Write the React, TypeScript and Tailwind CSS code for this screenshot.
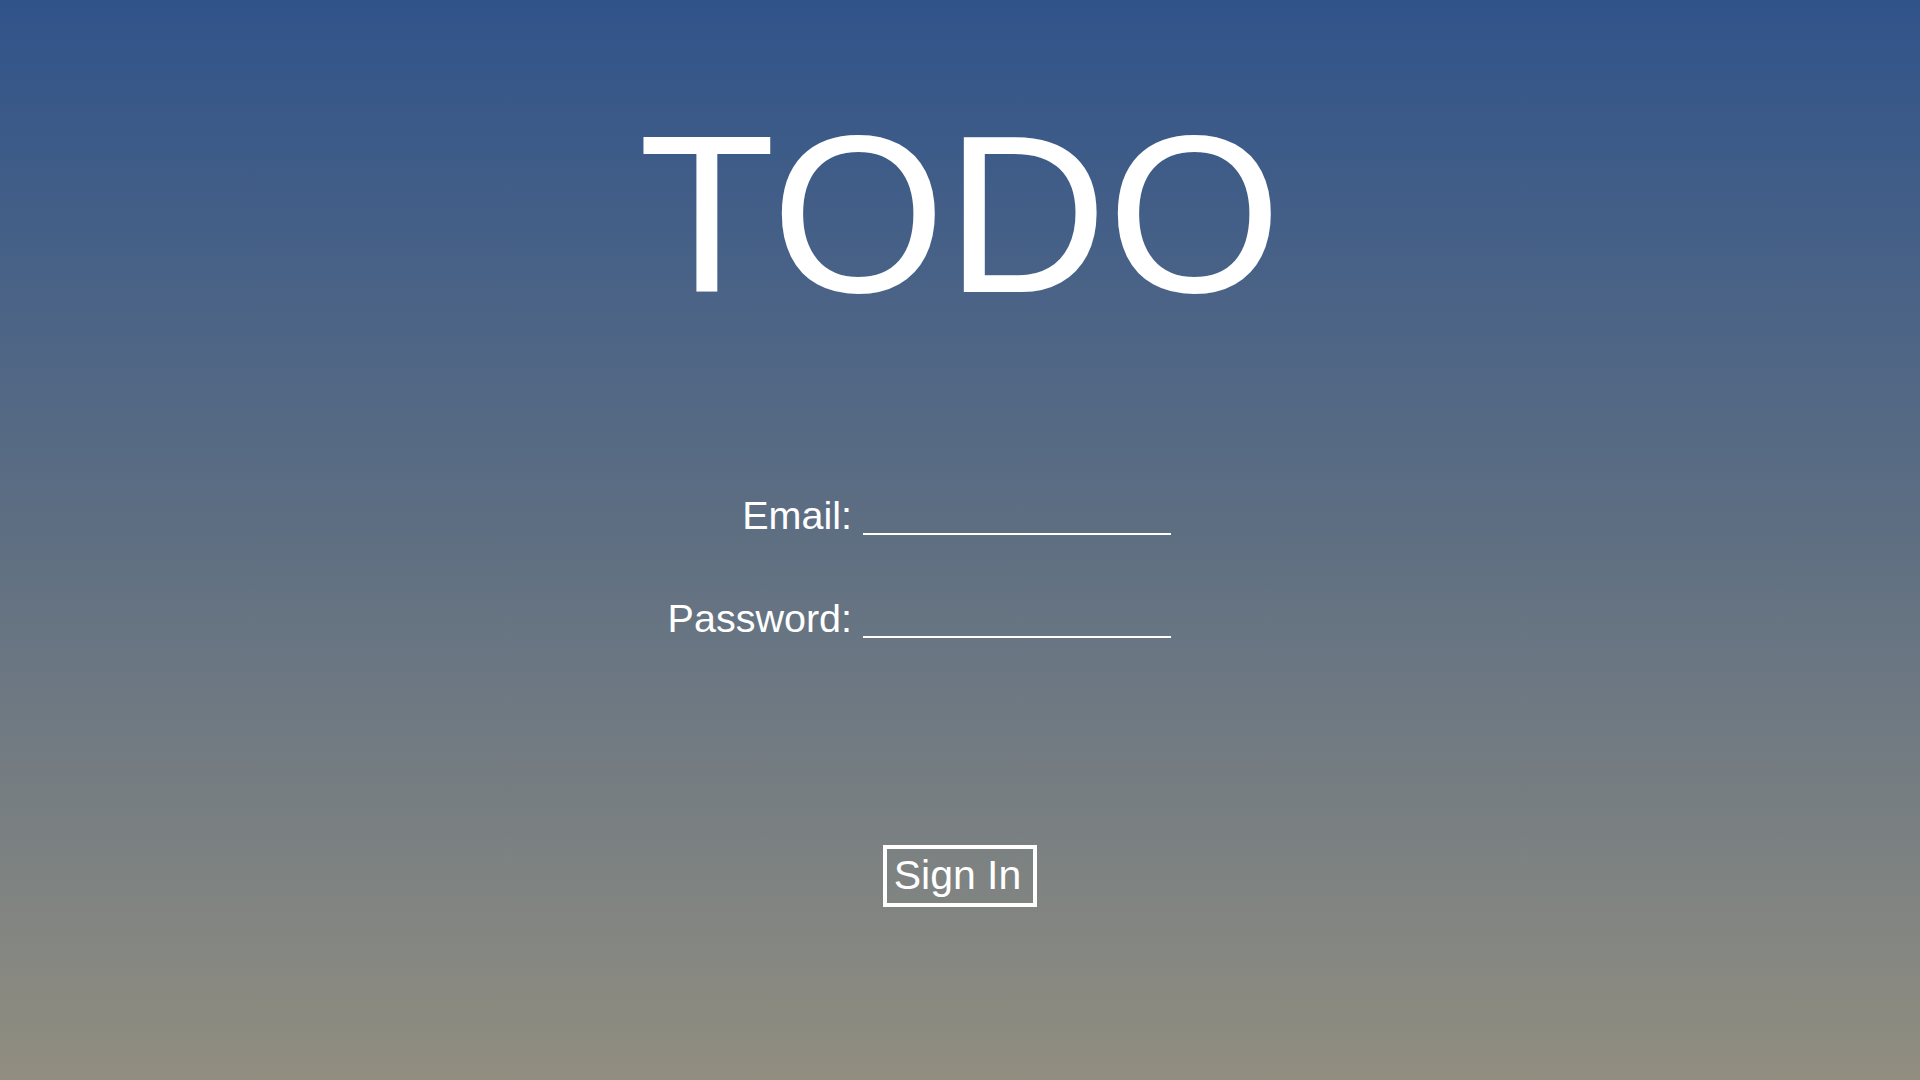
import { useState } from 'react';

export default function App() {
  const [email, setEmail] = useState('');
  const [password, setPassword] = useState('');

  return (
    <div
      className="w-full h-[1080px] overflow-hidden flex flex-col items-center text-white bg-gradient-to-b from-[#30538a] via-[#5f6f82] to-[#918e80]"
      style={{ fontFamily: '"Liberation Sans", Arial, sans-serif' }}
    >
      <h1 className="mt-[102px] text-[224px] leading-none font-normal">TODO</h1>

      <form
        className="mt-[169px] mr-[82px] grid grid-cols-[185px_308px] gap-x-[11px] gap-y-[63px] items-end"
        onSubmit={(e) => e.preventDefault()}
      >
        <label htmlFor="email" className="text-[39.5px] leading-[40px] text-right whitespace-nowrap">
          Email:
        </label>
        <input
          id="email"
          type="email"
          value={email}
          onChange={(e) => setEmail(e.target.value)}
          className="h-[40px] w-[308px] bg-transparent border-0 border-b-2 border-white text-[32px] text-white outline-none"
        />

        <label htmlFor="password" className="text-[39.5px] leading-[40px] text-right whitespace-nowrap">
          Password:
        </label>
        <input
          id="password"
          type="password"
          value={password}
          onChange={(e) => setPassword(e.target.value)}
          className="h-[40px] w-[308px] bg-transparent border-0 border-b-2 border-white text-[32px] text-white outline-none"
        />
      </form>

      <button
        type="button"
        className="mt-[207px] border-4 border-white pl-[7px] pr-[12px] pt-[3px] pb-[5px] text-[41px] leading-[46px] text-white bg-transparent"
      >
        Sign In
      </button>
    </div>
  );
}
